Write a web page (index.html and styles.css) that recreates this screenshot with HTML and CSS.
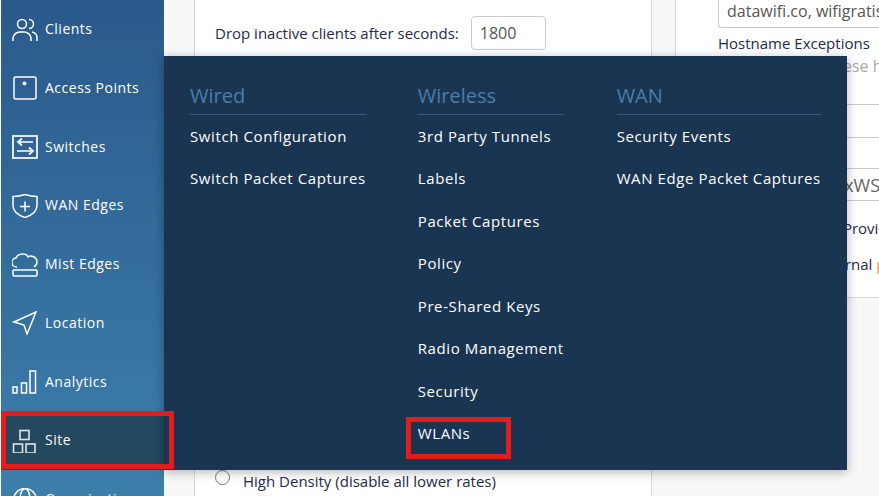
FILE: index.html
```html
<!DOCTYPE html>
<html lang="en">
<head>
<meta charset="utf-8">
<title>Site menu</title>
<link rel="stylesheet" href="styles.css">
</head>
<body>
<div class="app">
  <nav class="sidebar">
    <a class="nav-item"><svg class="ico" viewBox="0 0 26 24"><circle cx="10" cy="6" r="4.500"/><path d="M17 1.500a4.500 4.500 0 0 1 0 9M1 23v-3a7 7 0 0 1 7-6h4a7 7 0 0 1 7 6v3M20 14a6 6 0 0 1 5 6v3"/></svg><span>Clients</span></a>
    <a class="nav-item"><svg class="ico" viewBox="0 0 26 24"><rect x="2" y="1" width="22" height="22" rx="2"/><circle class="fill" cx="12.500" cy="7.500" r="2"/></svg><span>Access Points</span></a>
    <a class="nav-item"><svg class="ico ico-strong" viewBox="0 0 26 24"><rect x="1" y="1" width="24" height="22"/><path d="M21 7H6M10 3.500L6 7l4 3.500M5 16h16M17 12.500l4 3.500-4 3.500"/></svg><span>Switches</span></a>
    <a class="nav-item"><svg class="ico" viewBox="0 0 26 24"><path d="M1 2.500q6 0 12-2q6 2 12 2v9q0 8-12 12Q1 19.500 1 11.500zM13 7.500v10M8 12.500h10"/></svg><span>WAN Edges</span></a>
    <a class="nav-item"><svg class="ico" viewBox="0 0 26 24"><path d="M5 14a4.500 4.500 0 0 1-1-9q2-4.500 7-4 4 0 5 3 2-1.500 5-.5 4 1.500 4 5.500 0 3-3 5"/><rect x="1" y="17" width="24" height="6" rx="1"/></svg><span>Mist Edges</span></a>
    <a class="nav-item"><svg class="ico" viewBox="0 0 26 24"><path d="M2 11L24 1l-9 22-3-9z"/></svg><span>Location</span></a>
    <a class="nav-item"><svg class="ico" viewBox="0 0 26 24"><rect x="1" y="17" width="4" height="6"/><rect x="9.500" y="13" width="5" height="10"/><rect x="18" y="1" width="5.500" height="22"/></svg><span>Analytics</span></a>
    <a class="nav-item nav-active"><svg class="ico ico-muted" viewBox="0 0 26 24"><rect x="8" y="1.500" width="9" height="9"/><rect x="1.500" y="15" width="9" height="9"/><rect x="14" y="15" width="9" height="9"/></svg><span>Site</span></a>
    <a class="nav-item"><svg class="ico" viewBox="0 0 26 24"><circle cx="13" cy="12" r="11.500"/><ellipse cx="13" cy="12" rx="5" ry="11.500"/><path d="M2 12h22"/></svg><span>Organization</span></a>
  </nav>
  <main class="content">
    <section class="panel panel-left">
      <h4 class="clip-title">Client Inactivity</h4>
      <div class="drop-row">
        <label>Drop inactive clients after seconds:</label>
        <div class="box">1800</div>
      </div>
      <div class="density"><span class="radio"></span><span>High Density (disable all lower rates)</span></div>
    </section>
    <section class="panel panel-right">
      <div class="inner">
        <div class="field field-top">datawifi.co, wifigratis.com</div>
        <div class="hostname">Hostname Exceptions</div>
        <div class="field field-ph">Do not check these hostnames</div>
      </div>
      <div class="rule-gap"></div>
      <div class="rule-thin"></div>
      <div class="rule-key">MxWSxWSxWSxWSxWS</div>
      <div class="prov">Identity Provider</div>
      <div class="ext">External <span class="orange">portal</span></div>
    </section>
  </main>
</div>

<div class="flyout">
  <div class="col col-first">
    <h3>Wired</h3>
    <a>Switch Configuration</a>
    <a>Switch Packet Captures</a>
  </div>
  <div class="col col-second">
    <h3>Wireless</h3>
    <a>3rd Party Tunnels</a>
    <a>Labels</a>
    <a>Packet Captures</a>
    <a>Policy</a>
    <a>Pre-Shared Keys</a>
    <a>Radio Management</a>
    <a>Security</a>
    <a>WLANs</a>
  </div>
  <div class="col">
    <h3>WAN</h3>
    <a>Security Events</a>
    <a>WAN Edge Packet Captures</a>
  </div>
</div>
<div class="mark mark-site"></div>
<div class="mark mark-wlans"></div>
</body>
</html>
```

FILE: styles.css
```css
* { box-sizing: border-box; }
html, body { margin: 0; height: 100%; overflow: hidden; }
body { position: relative; width: 879px; height: 496px; background: #fff; font-family: "Open Sans", sans-serif; color: #1f2a44; }

.app { display: flex; height: 496px; padding-left: 1px; overflow: hidden; }

.sidebar { flex: 0 0 163px; height: 496px; padding-top: 0.200px; overflow: hidden; background: linear-gradient(180deg, #2a5a8b 0%, #3d7fab 100%); }
.nav-item { display: flex; align-items: center; height: 58.750px; padding-left: 11px; color: #fff; font-size: 14px; letter-spacing: 0.5px; }
.nav-item span { margin-left: 7px; position: relative; top: -1px; }
.nav-active { background: #24495f; }
.ico { width: 26px; height: 24px; fill: none; stroke: #fff; stroke-width: 1.500; flex: none; }
.ico .fill { fill: #fff; stroke: none; }
.ico-strong { stroke-width: 1.700; }
.ico-muted { stroke: #dfe4e8; stroke-width: 1.600; }

.content { flex: 1; display: flex; background: #f8f8f8; padding-left: 30px; gap: 23px; min-width: 0; }
.panel { background: #fff; border: 1px solid #d8d8d8; border-top: 0; height: 500px; font-size: 15px; }
.panel-left { flex: 0 0 458px; padding-left: 20px; }
.clip-title { margin: -20px 0 0; height: 22px; font-size: 15px; font-weight: 600; line-height: 20px; text-align: left; }
.drop-row { display: flex; align-items: center; gap: 12px; margin-top: 14px; }
.box { width: 75px; height: 34px; border: 1px solid #ccc; border-radius: 4px; padding-left: 8px; font-size: 16px; line-height: 32px; color: #555; }
.density { display: flex; gap: 13px; margin-top: 386px; padding-top: 36px; }
.density span:last-child { position: relative; top: -1px; }
.radio { width: 15px; height: 15px; margin-top: -2px; border: 1px solid #767676; border-radius: 50%; background: #fff; flex: none; }

.panel-right { flex: 1; height: 298px; overflow: hidden; white-space: nowrap; border-right: 0; min-width: 0; }
.inner { display: flow-root; padding-left: 42px; height: 105px; border-bottom: 1px solid #ccc; }
.field { color: #555; font-size: 16px; padding-left: 8px; }
.field-top { height: 29px; margin-top: -1px; border: 1px solid #ccc; border-right: 0; border-radius: 0 0 0 4px; line-height: 22px; }
.hostname { margin-top: 5px; line-height: 20px; }
.field-ph { margin-top: 2px; color: #aaa; line-height: 22px; }
.rule-gap { height: 33px; border-bottom: 1px solid #ccc; }
.rule-thin { height: 31px; border-bottom: 1px solid #ccc; }
.rule-key { height: 32px; padding-left: 152px; border-bottom: 1px solid #ccc; color: #666; font-size: 18px; line-height: 33px; }
.prov { margin-top: 17px; padding-left: 110px; line-height: 20px; }
.ext { margin-top: 16px; padding-left: 139px; line-height: 20px; }
.orange { color: #e8a040; }

.flyout { position: absolute; left: 164px; top: 56px; width: 683px; height: 414px; display: flex; padding: 26px 26px 0; background: #193552; box-shadow: 0 2px 10px rgba(0, 0, 0, 0.3); }
.col { display: flex; flex-direction: column; }
.col-first { margin-right: 52px; }
.col-second { margin-right: 53px; }
.col h3 { flex: none; margin: 0 0 6.500px; padding-bottom: 4px; border-bottom: 1px solid #3d5a7a; color: #4a7da8; font-size: 20px; font-weight: 400; line-height: 28px; }
.col a { display: block; flex: none; height: 42.500px; color: #fff; font-size: 15px; font-weight: 500; line-height: 28px; letter-spacing: 0.6px; white-space: nowrap; }

.mark { position: absolute; border: 5px solid #e31c1c; }
.mark-site { left: 1px; top: 411px; width: 173px; height: 58px; }
.mark-wlans { left: 406px; top: 417px; width: 105px; height: 42px; }
```
